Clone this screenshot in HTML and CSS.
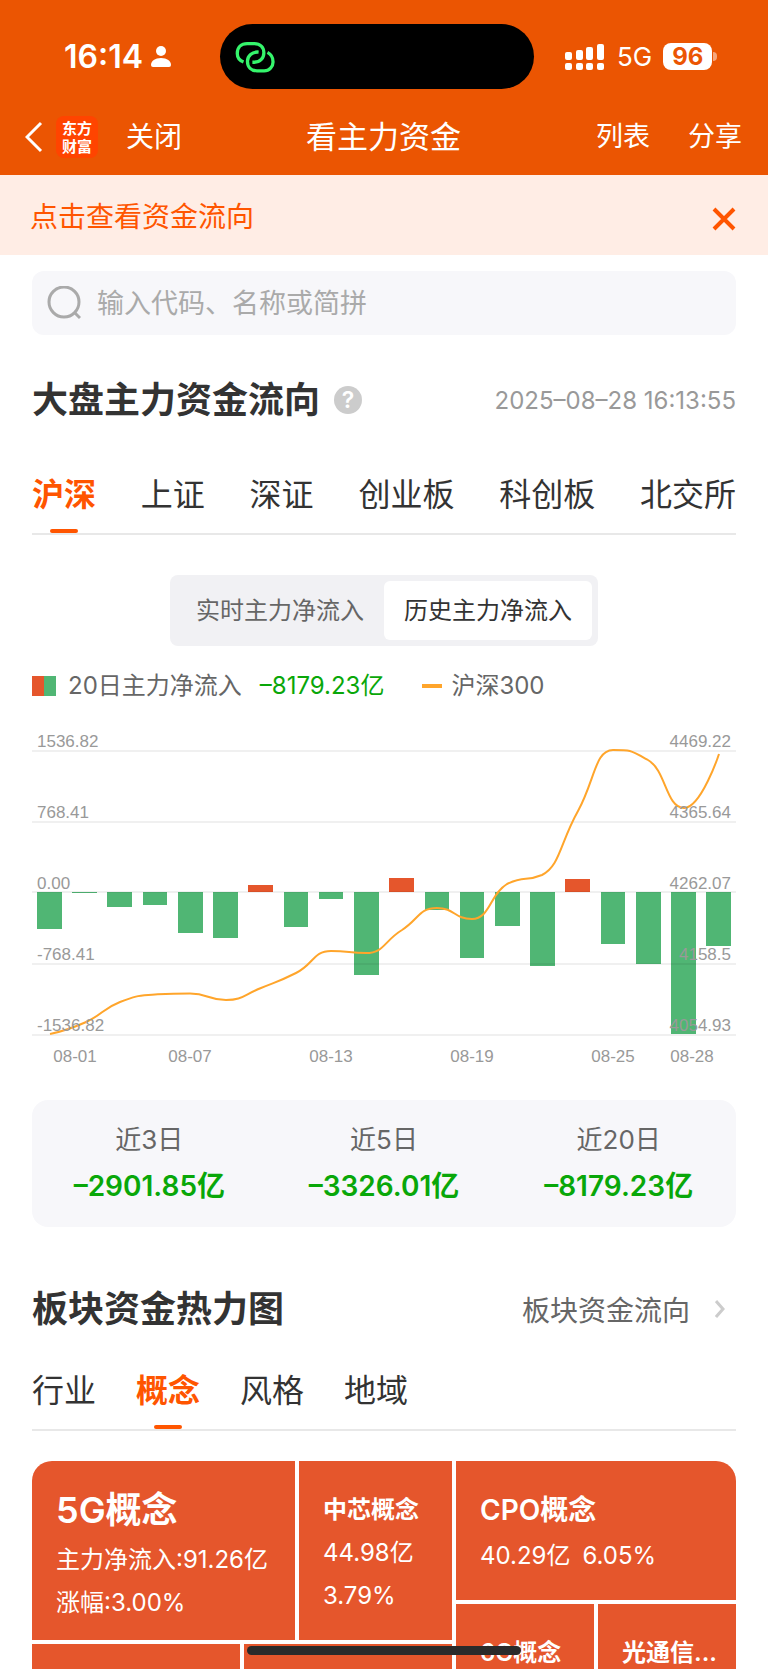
FILE: index.html
```html
<!DOCTYPE html>
<html lang="zh-CN">
<head>
    <meta charset="UTF-8">
    <meta name="viewport" content="width=device-width, initial-scale=1.0">
    <title>看主力资金</title>
    <link rel="stylesheet" href="styles.css">
</head>
<body>
    <header class="header">
        <div class="status-bar">
            <div class="status-left">
                <span class="time">16:14</span>
                <svg class="person" width="20" height="23" viewBox="0 0 20 23" fill="#fff">
                    <circle cx="10" cy="6" r="5"/>
                    <path d="M0 20C0 16 4 13 10 13S20 16 20 20Q20 22 18 22H2Q0 22 0 20Z"/>
                </svg>
            </div>
            <div class="island">
                <svg width="42" height="34" viewBox="0 0 128 102" fill="none" stroke="#35f56c" stroke-width="10">
                    <path d="M29 66C16 61 10 51 10 40C10 22 22 10 40 10H62C80 10 91 22 91 38C91 54 80 67 62 67H56"/>
                    <path d="M75 36C55 34 41 48 41 64C41 82 53 93 70 93H92C108 93 119 80 119 66C119 52 112 42 102 37"/>
                </svg>
            </div>
            <div class="status-right">
                <svg width="39" height="28" viewBox="0 0 39 28" fill="#fff">
                    <rect x="0" y="9" width="7" height="8" rx="2"/>
                    <rect x="11" y="7" width="7" height="10" rx="2"/>
                    <rect x="21" y="4" width="7" height="13" rx="2"/>
                    <rect x="32" y="1" width="7" height="16" rx="2"/>
                    <rect x="0" y="20" width="7" height="7" rx="2"/>
                    <rect x="11" y="20" width="7" height="7" rx="2"/>
                    <rect x="21" y="20" width="7" height="7" rx="2"/>
                    <rect x="32" y="20" width="7" height="7" rx="2"/>
                </svg>
                <span class="network">5G</span>
                <div class="battery"><span class="battery-level">96</span><span class="battery-cap"></span></div>
            </div>
        </div>
        <nav class="nav-bar">
            <div class="nav-left">
                <button class="icon-btn" aria-label="返回">
                    <svg width="18" height="32" viewBox="0 0 18 32" fill="none" stroke="#fff" stroke-width="3"><path d="M16 2L2 16L16 30"/></svg>
                </button>
                <a class="logo" href="#"><span>东方</span><span>财富</span></a>
                <a class="nav-link nav-close" href="#">关闭</a>
            </div>
            <h1 class="nav-title">看主力资金</h1>
            <div class="nav-right">
                <a class="nav-link" href="#">列表</a>
                <a class="nav-link" href="#">分享</a>
            </div>
        </nav>
    </header>

    <div class="notice">
        <a href="#">点击查看资金流向</a>
        <button class="icon-btn" aria-label="关闭提示">
            <svg width="24" height="24" viewBox="0 0 24 24" fill="none" stroke="#ff5500" stroke-width="4"><path d="M2 2L22 22M22 2L2 22"/></svg>
        </button>
    </div>

    <main class="main">
        <label class="search">
            <svg width="34" height="34" viewBox="0 0 34 34" fill="none" stroke="#aaa" stroke-width="3">
                <circle cx="17" cy="16" r="15"/>
                <path d="M27 26L33 32"/>
            </svg>
            <input type="text" placeholder="输入代码、名称或简拼" aria-label="搜索">
        </label>

        <section>
            <div class="section-head market-head">
                <h2>大盘主力资金流向</h2>
                <button class="help" aria-label="说明">?</button>
                <time class="update-time">2025–08–28 16:13:55</time>
            </div>
            <div class="tabs market-tabs">
                <button class="tab active">沪深</button>
                <button class="tab">上证</button>
                <button class="tab">深证</button>
                <button class="tab">创业板</button>
                <button class="tab">科创板</button>
                <button class="tab">北交所</button>
            </div>
            <div class="switch">
                <button class="switch-btn">实时主力净流入</button>
                <button class="switch-btn active">历史主力净流入</button>
            </div>
            <div class="legend">
                <span class="legend-box"></span>
                <span>20日主力净流入</span>
                <span class="legend-value">–8179.23亿</span>
                <span class="legend-line"></span>
                <span>沪深300</span>
            </div>
            <svg class="chart" viewBox="0 0 704 360">
                <!-- 净流入柱 -->
                <g class="bar-out">
                    <rect x="5" y="172" width="25" height="37"/>
                    <rect x="40" y="172" width="25" height="1"/>
                    <rect x="75" y="172" width="25" height="15"/>
                    <rect x="111" y="172" width="24" height="13"/>
                    <rect x="146" y="172" width="25" height="41"/>
                    <rect x="181" y="172" width="25" height="46"/>
                    <rect x="252" y="172" width="24" height="35"/>
                    <rect x="287" y="172" width="24" height="7"/>
                    <rect x="322" y="172" width="25" height="83"/>
                    <rect x="393" y="172" width="24" height="18"/>
                    <rect x="428" y="172" width="24" height="66"/>
                    <rect x="463" y="172" width="25" height="34"/>
                    <rect x="498" y="172" width="25" height="74"/>
                    <rect x="569" y="172" width="24" height="52"/>
                    <rect x="604" y="172" width="25" height="72"/>
                    <rect x="639" y="172" width="25" height="142"/>
                    <rect x="674" y="172" width="25" height="54"/>
                </g>
                <g class="bar-in">
                    <rect x="216" y="165" width="25" height="7"/>
                    <rect x="357" y="158" width="25" height="14"/>
                    <rect x="533" y="159" width="25" height="13"/>
                </g>
                <!-- 网格线 -->
                <path class="grid-line" d="M0 31H704M0 102H704M0 172H704M0 244H704M0 315H704"/>
                <!-- 沪深300 -->
                <path class="index-line" d="M18 314C18 314 35 310.500 53 302.500C71 294.500 70 289 88 282C106 275 106 276 123 274.500C141 273.500 140 273.500 158 273.500C176 273.500 176 280 194 280C211 280 211 275 229 268C246 261 246 262 264 253C282 244 281 231 299 231C317 231 317 233 334 233C352 233 352 221 370 210C387 199 387 188 405 188C423 188 422 199 440 199C458 199 458 174 475 164C493 155 493 162 510 155C528 146 528 123 546 91C563 60 563 30 581 30C599 30 598 30 616 40C634 50 634 88 652 88C669 88 687 34 687 34"/>
                <g class="axis-text">
                    <text x="5" y="27">1536.82</text>
                    <text x="5" y="98">768.41</text>
                    <text x="5" y="169">0.00</text>
                    <text x="5" y="240">-768.41</text>
                    <text x="5" y="311">-1536.82</text>
                </g>
                <g class="axis-text" text-anchor="end">
                    <text x="699" y="27">4469.22</text>
                    <text x="699" y="98">4365.64</text>
                    <text x="699" y="169">4262.07</text>
                    <text x="699" y="240">4158.5</text>
                    <text x="699" y="311">4054.93</text>
                </g>
                <g class="axis-text" text-anchor="middle">
                    <text x="43" y="342">08-01</text>
                    <text x="158" y="342">08-07</text>
                    <text x="299" y="342">08-13</text>
                    <text x="440" y="342">08-19</text>
                    <text x="581" y="342">08-25</text>
                    <text x="660" y="342">08-28</text>
                </g>
            </svg>
            <div class="summary">
                <div><p class="summary-label">近3日</p><p class="summary-value">–2901.85亿</p></div>
                <div><p class="summary-label">近5日</p><p class="summary-value">–3326.01亿</p></div>
                <div><p class="summary-label">近20日</p><p class="summary-value">–8179.23亿</p></div>
            </div>
        </section>

        <section class="plate">
            <div class="section-head plate-head">
                <h2>板块资金热力图</h2>
                <a class="more" href="#">板块资金流向
                    <svg width="10" height="18" viewBox="0 0 10 18" fill="none" stroke="#ccc" stroke-width="3"><path d="M1 1L8 9L1 17"/></svg>
                </a>
            </div>
            <div class="tabs plate-tabs">
                <button class="tab">行业</button>
                <button class="tab active">概念</button>
                <button class="tab">风格</button>
                <button class="tab">地域</button>
            </div>
            <div class="heatmap">
                <div class="heat-left">
                    <div class="heat-row heat-top">
                        <div class="tile tile-lg">
                            <h3>5G概念</h3>
                            <p>主力净流入:91.26亿</p>
                            <p>涨幅:3.00%</p>
                        </div>
                        <div class="tile">
                            <h3>中芯概念</h3>
                            <p>44.98亿</p>
                            <p>3.79%</p>
                        </div>
                    </div>
                    <div class="heat-row">
                        <div class="tile"></div>
                        <div class="tile"></div>
                    </div>
                </div>
                <div class="heat-right">
                    <div class="tile tile-md">
                        <h3>CPO概念</h3>
                        <p><span>40.29亿</span><span>6.05%</span></p>
                    </div>
                    <div class="heat-row">
                        <div class="tile"><h3>6G概念</h3></div>
                        <div class="tile"><h3>光通信...</h3></div>
                    </div>
                </div>
            </div>
        </section>
    </main>
    <div class="home-indicator"></div>
</body>
</html>
```
FILE: styles.css
```css
* {box-sizing:border-box;}
body {margin:0; height:100vh; overflow:hidden; display:flex; flex-direction:column; background:#fff; color:#333; font-family:Inter, "Noto Sans CJK SC", sans-serif; font-size:24px;}
h1, h2, h3, p {margin:0;}
a {color:inherit; text-decoration:none;}
button {border:none; background:none; padding:0; font:inherit; color:inherit; cursor:pointer;}
svg {display:block; flex-shrink:0;}
.icon-btn {display:flex; align-items:center;}

/* header */
.header {background:#eb5502; color:#fff; padding-top:24px; flex-shrink:0;}
.status-bar {display:grid; grid-template-columns:1fr 314px 1fr; height:65px; padding-right:14px; align-items:center;}
.status-left {display:flex; align-items:center; justify-content:flex-end; gap:8px; padding-right:49px;}
.time {font-size:32px; font-weight:600; line-height:40px;}
.island {height:65px; border-radius:33px; background:#000; display:flex; align-items:center; padding-left:14px;}
.status-right {display:flex; align-items:center; padding-left:31px;}
.network {font-size:26px; line-height:32px; margin:0 11px 0 13px;}
.battery {display:flex; align-items:center; gap:1px;}
.battery-level {width:49px; height:27px; border-radius:8px; background:#fff; color:#eb5502; font-size:24px; font-weight:700; line-height:27px; text-align:center;}
.battery-cap {width:4px; height:9px; border-radius:0 4px 4px 0; background:#f5a77d;}
.nav-bar {display:grid; grid-template-columns:1fr auto 1fr; align-items:center; height:86px; padding:10px 26px 0 25px;}
.nav-left {display:flex; align-items:center;}
.logo {width:42px; height:42px; margin:0 28px 0 13px; border-radius:8px; background:#ff4400; display:flex; flex-direction:column; align-items:center; justify-content:center; font-family:"Noto Sans CJK SC", sans-serif; font-size:15px; font-weight:700; line-height:18px;}
.nav-title {font-size:31px; font-weight:400; line-height:40px;}
.nav-link {font-size:27px; line-height:40px;}
.nav-close {font-size:28px;}
.nav-right {display:flex; justify-content:flex-end; gap:38px;}

.notice {display:flex; align-items:center; justify-content:space-between; height:80px; padding:0 32px 0 30px; background:#ffede5; color:#ff5500; font-size:28px; flex-shrink:0;}
.notice .icon-btn {padding-top:8px;}

/* main */
.main {flex:1; min-height:0; display:flex; flex-direction:column; padding:16px 32px 0;}
.search {display:flex; align-items:center; gap:16px; height:64px; padding:0 15px; border-radius:12px; background:#f7f7fa; flex-shrink:0;}
.search input {flex:1; min-width:0; border:none; outline:none; background:none; padding:0; font:inherit; font-size:27px; color:#333;}
.search input::placeholder {color:#aaa; opacity:1;}

.section-head {display:flex; align-items:center; height:48px;}
.section-head h2 {font-size:36px; line-height:48px; font-weight:600;}
.market-head {margin-top:41px;}
.help {width:28px; height:28px; margin-left:14px; border-radius:50%; background:#ccc; color:#fff; font-size:23px; font-weight:600; line-height:28px;}
.update-time {margin-left:auto; color:#999;}

.tabs {display:flex; border-bottom:2px solid #e8e8e8;}
.tab {position:relative; padding:2px 0 14px; font-size:32px; line-height:48px;}
.tab.active {color:#ff5500; font-weight:600;}
.tab.active::after {content:""; position:absolute; left:50%; bottom:0; width:28px; height:4px; margin-left:-14px; border-radius:2px; background:#ff5500;}
.market-tabs {justify-content:space-between; margin-top:45px;}

.switch {display:flex; width:fit-content; margin:40px auto 0; padding:6px; border-radius:8px; background:#f1f1f4;}
.switch-btn {padding:0 20px; line-height:59px; color:#666;}
.switch-btn.active {background:#fff; color:#333; border-radius:6px;}

.legend {display:flex; align-items:center; margin-top:24px; line-height:32px; color:#666;}
.legend-box {width:24px; height:20px; margin-right:12px; background:linear-gradient(90deg, #e5562c 50%, #50b674 50%);}
.legend-value {margin:0 38px 0 18px; color:#09a709;}
.legend-line {width:20px; height:4px; margin-right:9px; background:#ffa52b;}

.chart {width:100%; height:auto; margin-top:18px;}
.bar-out {fill:#50b674;}
.bar-in {fill:#e5562c;}
.grid-line {stroke:#000; stroke-opacity:0.06; stroke-width:2; fill:none;}
.index-line {stroke:#ffa52b; stroke-width:2; fill:none;}
.axis-text {font-family:"Liberation Sans", Arial, sans-serif; font-size:17px; fill:#999;}

.summary {display:grid; grid-template-columns:repeat(3, 1fr); margin-top:20px; padding:20px 0 16px; border-radius:16px; background:#f7f7fa; text-align:center;}
.summary-label {font-size:26px; line-height:40px; color:#666;}
.summary-value {font-size:28px; line-height:50px; padding-top:1px; font-weight:600; color:#09a709;}

/* heatmap */
.plate {flex:1; min-height:0; display:flex; flex-direction:column;}
.plate-head {margin-top:58px; justify-content:space-between; flex-shrink:0;}
.more {display:flex; align-items:center; gap:25px; padding-right:11px; font-size:28px; color:#666;}
.plate-tabs {gap:40px; margin-top:32px;}
.heatmap {flex:1; min-height:0; display:grid; grid-template-columns:3fr 2fr; gap:4px; margin-top:30px; border-radius:20px 20px 0 0; overflow:hidden;}
.heat-left {display:grid; grid-template-rows:179px 1fr; gap:4px; min-height:0;}
.heat-right {display:grid; grid-template-rows:139px 1fr; gap:4px; min-height:0;}
.heat-row {display:grid; grid-template-columns:1fr 1fr; gap:4px; min-height:0;}
.heat-top {grid-template-columns:263fr 153fr;}
.tile {min-width:0; overflow:hidden; padding:27px 0 0 24px; background:#e5562c; color:#fff; line-height:43px; white-space:nowrap;}
.tile h3 {font-size:24px; font-weight:600;}
.tile-lg {padding-top:21px;}
.tile-lg h3 {font-size:36px; line-height:56px;}
.tile-md {padding-top:25px;}
.tile-md h3 {font-size:28px; line-height:48px;}
.tile-md p {display:flex; gap:12px;}
.home-indicator {position:fixed; left:50%; bottom:14px; width:274px; height:9px; margin-left:-137px; border-radius:5px; background:#2b2b2b;}
```
